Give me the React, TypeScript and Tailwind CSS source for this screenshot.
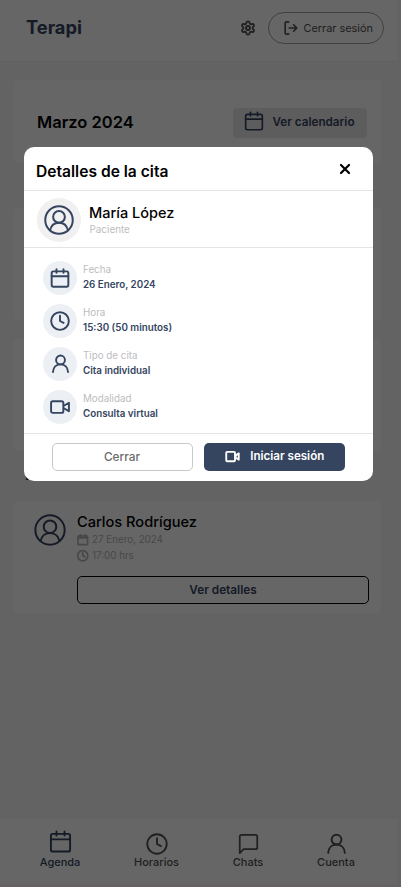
import React from "react";
import { Settings } from "lucide-react";

type IconProps = { className?: string; strokeWidth?: number };

function Svg({ className, strokeWidth = 2, children }: IconProps & { children: React.ReactNode }) {
  return (
    <svg viewBox="0 0 24 24" fill="none" stroke="currentColor" strokeWidth={strokeWidth} strokeLinecap="round" strokeLinejoin="round" className={`shrink-0 ${className ?? ""}`}>
      {children}
    </svg>
  );
}

const Calendar = (p: IconProps) => (
  <Svg {...p}>
    <rect x="2" y="4" width="20" height="18.500" rx="2" />
    <path d="M2 9.800h20M7.800 1.500v4.300M16.200 1.500v4.300" />
  </Svg>
);
const Clock = (p: IconProps) => (
  <Svg {...p}>
    <circle cx="12" cy="12" r="10.600" />
    <path d="M12 5.600V12l4.300 2.300" />
  </Svg>
);
const Person = (p: IconProps) => (
  <Svg {...p}>
    <circle cx="12" cy="7.500" r="5.600" />
    <path d="M2.500 22.700c.3-5.600 4-9.600 9.500-9.600s9.200 4 9.500 9.600" />
  </Svg>
);
const Video = (p: IconProps) => (
  <Svg {...p}>
    <rect x="1.300" y="5" width="14.700" height="14" rx="2" />
    <path d="M16.500 10.500 22.700 7v10l-6.200-3.500" />
  </Svg>
);
const VideoSmall = (p: IconProps) => (
  <Svg {...p}>
    <rect x="2" y="4.500" width="14" height="15" rx="1.500" />
    <path d="M17 10.500l5-3.500v10l-5-3.500z" />
  </Svg>
);
const SolidCalendar = ({ className }: IconProps) => (
  <Svg className={className} strokeWidth={3.400}>
    <rect x="2" y="4" width="20" height="18.300" rx="1.500" />
    <path d="M3 7.500h18" strokeWidth={5} />
    <path d="M7 1.500v4M17 1.500v4" />
  </Svg>
);
const Avatar = (p: IconProps) => (
  <Svg {...p}>
    <circle cx="12" cy="12" r="11" />
    <circle cx="12" cy="9.500" r="4.700" />
    <path d="M4.900 20.300c.7-3.600 3.400-6.100 7.100-6.100s6.400 2.500 7.100 6.100" />
  </Svg>
);
const Chat = (p: IconProps) => (
  <Svg {...p}>
    <path d="M2 23V4a2 2 0 0 1 2-2h16a2 2 0 0 1 2 2v12.500a2 2 0 0 1-2 2H6.500z" />
  </Svg>
);
const Logout = (p: IconProps) => (
  <Svg {...p}>
    <path d="M8 1.500H4.500A2.500 2.500 0 0 0 2 4v16a2.500 2.500 0 0 0 2.500 2.500H8M9 12h12.500M16.500 6.500 22 12l-5.500 5.500" />
  </Svg>
);

function Detail({ icon, label, value }: { icon: React.ReactNode; label: string; value: string }) {
  return (
    <div className="flex h-[34px] items-center gap-1.5">
      <div className="flex size-[34px] items-center justify-center rounded-full bg-[#ecf0f4] text-[#36455f]">{icon}</div>
      <div className="flex flex-col text-[9.800px] leading-[14.5px]">
        <span className="text-[#bdbdbd]">{label}</span>
        <span className="font-semibold text-[#36455f]">{value}</span>
      </div>
    </div>
  );
}

function Tab({ icon, label, className }: { icon: React.ReactNode; label: string; className: string }) {
  return (
    <div className={`flex flex-col items-center text-[11px] font-medium leading-[14px] ${className}`}>
      <div className="flex h-6 items-start">{icon}</div>
      <span>{label}</span>
    </div>
  );
}

export default function App() {
  return (
    <div className="relative h-[887px] w-[401px] overflow-hidden bg-[#fff5fa] font-['Inter',sans-serif]">
      <div className="flex h-[884px] w-[398px] flex-col bg-[#f8f8f8]">
        <header className="flex h-[62px] shrink-0 items-start border-b border-[#f2f2f2] bg-white pl-[26px] pr-[14px] pt-3">
          <h1 className="text-[18.300px] font-bold leading-[31px] text-[#36455f]">Terapi</h1>
          <div className="ml-auto flex h-8 items-center">
            <Settings className="mr-3 size-[16px] text-[#505050]" strokeWidth={2.800} />
            <button className="flex h-8 w-[116.500px] items-center gap-1.5 rounded-full border border-[#a0a0a0] pl-[15px] text-[10.900px] text-[#505050]">
              <Logout className="size-[14px]" strokeWidth={2.800} />
              Cerrar sesión
            </button>
          </div>
        </header>

        <main className="flex grow flex-col pl-[14px] pr-[17px] pt-[18px]">
          <section className="flex h-[83px] items-start justify-between rounded bg-white pl-[23px] pr-[14px] pt-7">
            <h2 className="text-[16.500px] font-semibold leading-[29px] text-black">Marzo 2024</h2>
            <button className="flex h-[30px] w-[134px] items-center justify-center gap-2 rounded bg-[#e8e8e8] pr-px text-[11.700px] font-semibold text-[#36455f]">
              <Calendar className="mb-[4px] size-5" />
              Ver calendario
            </button>
          </section>
          <section className="mt-[45px] h-[112px] rounded bg-white" />
          <section className="mt-[18px] h-[113px] rounded bg-white" />
          <h2 className="ml-[11px] mt-[13px] h-[37px] text-[16px] font-semibold leading-[20px] text-black">Próximas citas</h2>
          <section className="flex h-[113px] items-start rounded bg-white pl-[20px] pr-[12px] pt-[13px]">
            <Avatar className="size-8 text-[#36455f]" strokeWidth={1.500} />
            <div className="ml-[11px] flex grow flex-col">
              <h3 className="text-[14.600px] font-medium leading-[17px] text-black">Carlos Rodríguez</h3>
              <p className="mt-px flex h-4 items-center gap-[3.500px] text-[9.800px] text-[#b4b4b4]">
                <SolidCalendar className="size-[11.500px]" />
                27 Enero, 2024
              </p>
              <p className="flex h-4 items-center gap-[3.500px] text-[9.800px] text-[#b4b4b4]">
                <Clock className="size-[11.500px]" strokeWidth={3.500} />
                17:00 hrs
              </p>
              <button className="mt-3 h-7 rounded-[5px] border border-black pt-[2px] text-[11.800px] font-semibold text-[#36455f]">Ver detalles</button>
            </div>
          </section>
        </main>

        <nav className="flex h-[65px] shrink-0 bg-white pl-[40px] pt-[12px]">
          <Tab className="mr-[54.500px] w-10 text-[#36455f]" label="Agenda" icon={<Calendar className="-mt-px size-[23px]" />} />
          <Tab className="mr-[49.500px] w-11 text-[#505050]" label="Horarios" icon={<Clock className="mt-0.5 size-[22px]" />} />
          <Tab className="mr-[48px] w-10 text-[#505050]" label="Chats" icon={<Chat className="mt-0.5 size-[21px]" />} />
          <Tab className="w-10 text-[#505050]" label="Cuenta" icon={<Person className="mt-0.5 size-[21px]" strokeWidth={2.200} />} />
        </nav>
      </div>

      <div className="absolute inset-0 bg-black/60 pl-[23.5px] pt-[146.5px]">
        <div role="dialog" className="flex h-[334.500px] w-[349.500px] flex-col rounded-[10px] bg-white">
          <div className="flex h-[44px] items-center justify-between border-b border-[#e4e4e4] pl-[12.500px] pr-[22px]">
            <h2 className="pt-[7px] text-[15.600px] font-semibold text-black">Detalles de la cita</h2>
            <Svg className="mt-[2px] size-3 text-black" strokeWidth={4.500}>
              <path d="m4 4 16 16M20 4 4 20" />
            </Svg>
          </div>
          <div className="flex h-[57px] items-center gap-2 border-b border-[#e4e4e4] pl-[13.500px] pt-[2px]">
            <div className="flex size-11 items-center justify-center rounded-full bg-[#f0f0f0]">
              <Avatar className="size-[30px] text-[#36455f]" strokeWidth={1.600} />
            </div>
            <div className="flex flex-col pt-px">
              <span className="text-[14.500px] font-medium leading-[18px] text-black">María López</span>
              <span className="pl-[0.500px] text-[9.900px] leading-[14px] text-[#bdbdbd]">Paciente</span>
            </div>
          </div>
          <div className="flex h-[186px] flex-col gap-[9px] border-b border-[#e4e4e4] pl-[19.500px] pt-[13px]">
            <Detail icon={<Calendar className="size-5" strokeWidth={2.300} />} label="Fecha" value="26 Enero, 2024" />
            <Detail icon={<Clock className="size-5" strokeWidth={2.300} />} label="Hora" value="15:30 (50 minutos)" />
            <Detail icon={<Person className="size-[19px]" strokeWidth={2.400} />} label="Tipo de cita" value="Cita individual" />
            <Detail icon={<Video className="size-5" strokeWidth={2.300} />} label="Modalidad" value="Consulta virtual" />
          </div>
          <div className="flex gap-[11.500px] pl-[28px] pt-[9.500px]">
            <button className="h-7 w-[141px] rounded-[5px] border border-[#c8c8c8] pt-[2px] text-[11.800px] font-medium text-[#6b6b6b]">Cerrar</button>
            <button className="flex h-7 w-[141px] items-center justify-center gap-[10.500px] rounded-[5px] bg-[#36455f] text-[11.600px] font-semibold text-white">
              <VideoSmall className="mb-px size-[15px]" strokeWidth={3} />
              Iniciar sesión
            </button>
          </div>
        </div>
      </div>
    </div>
  );
}
